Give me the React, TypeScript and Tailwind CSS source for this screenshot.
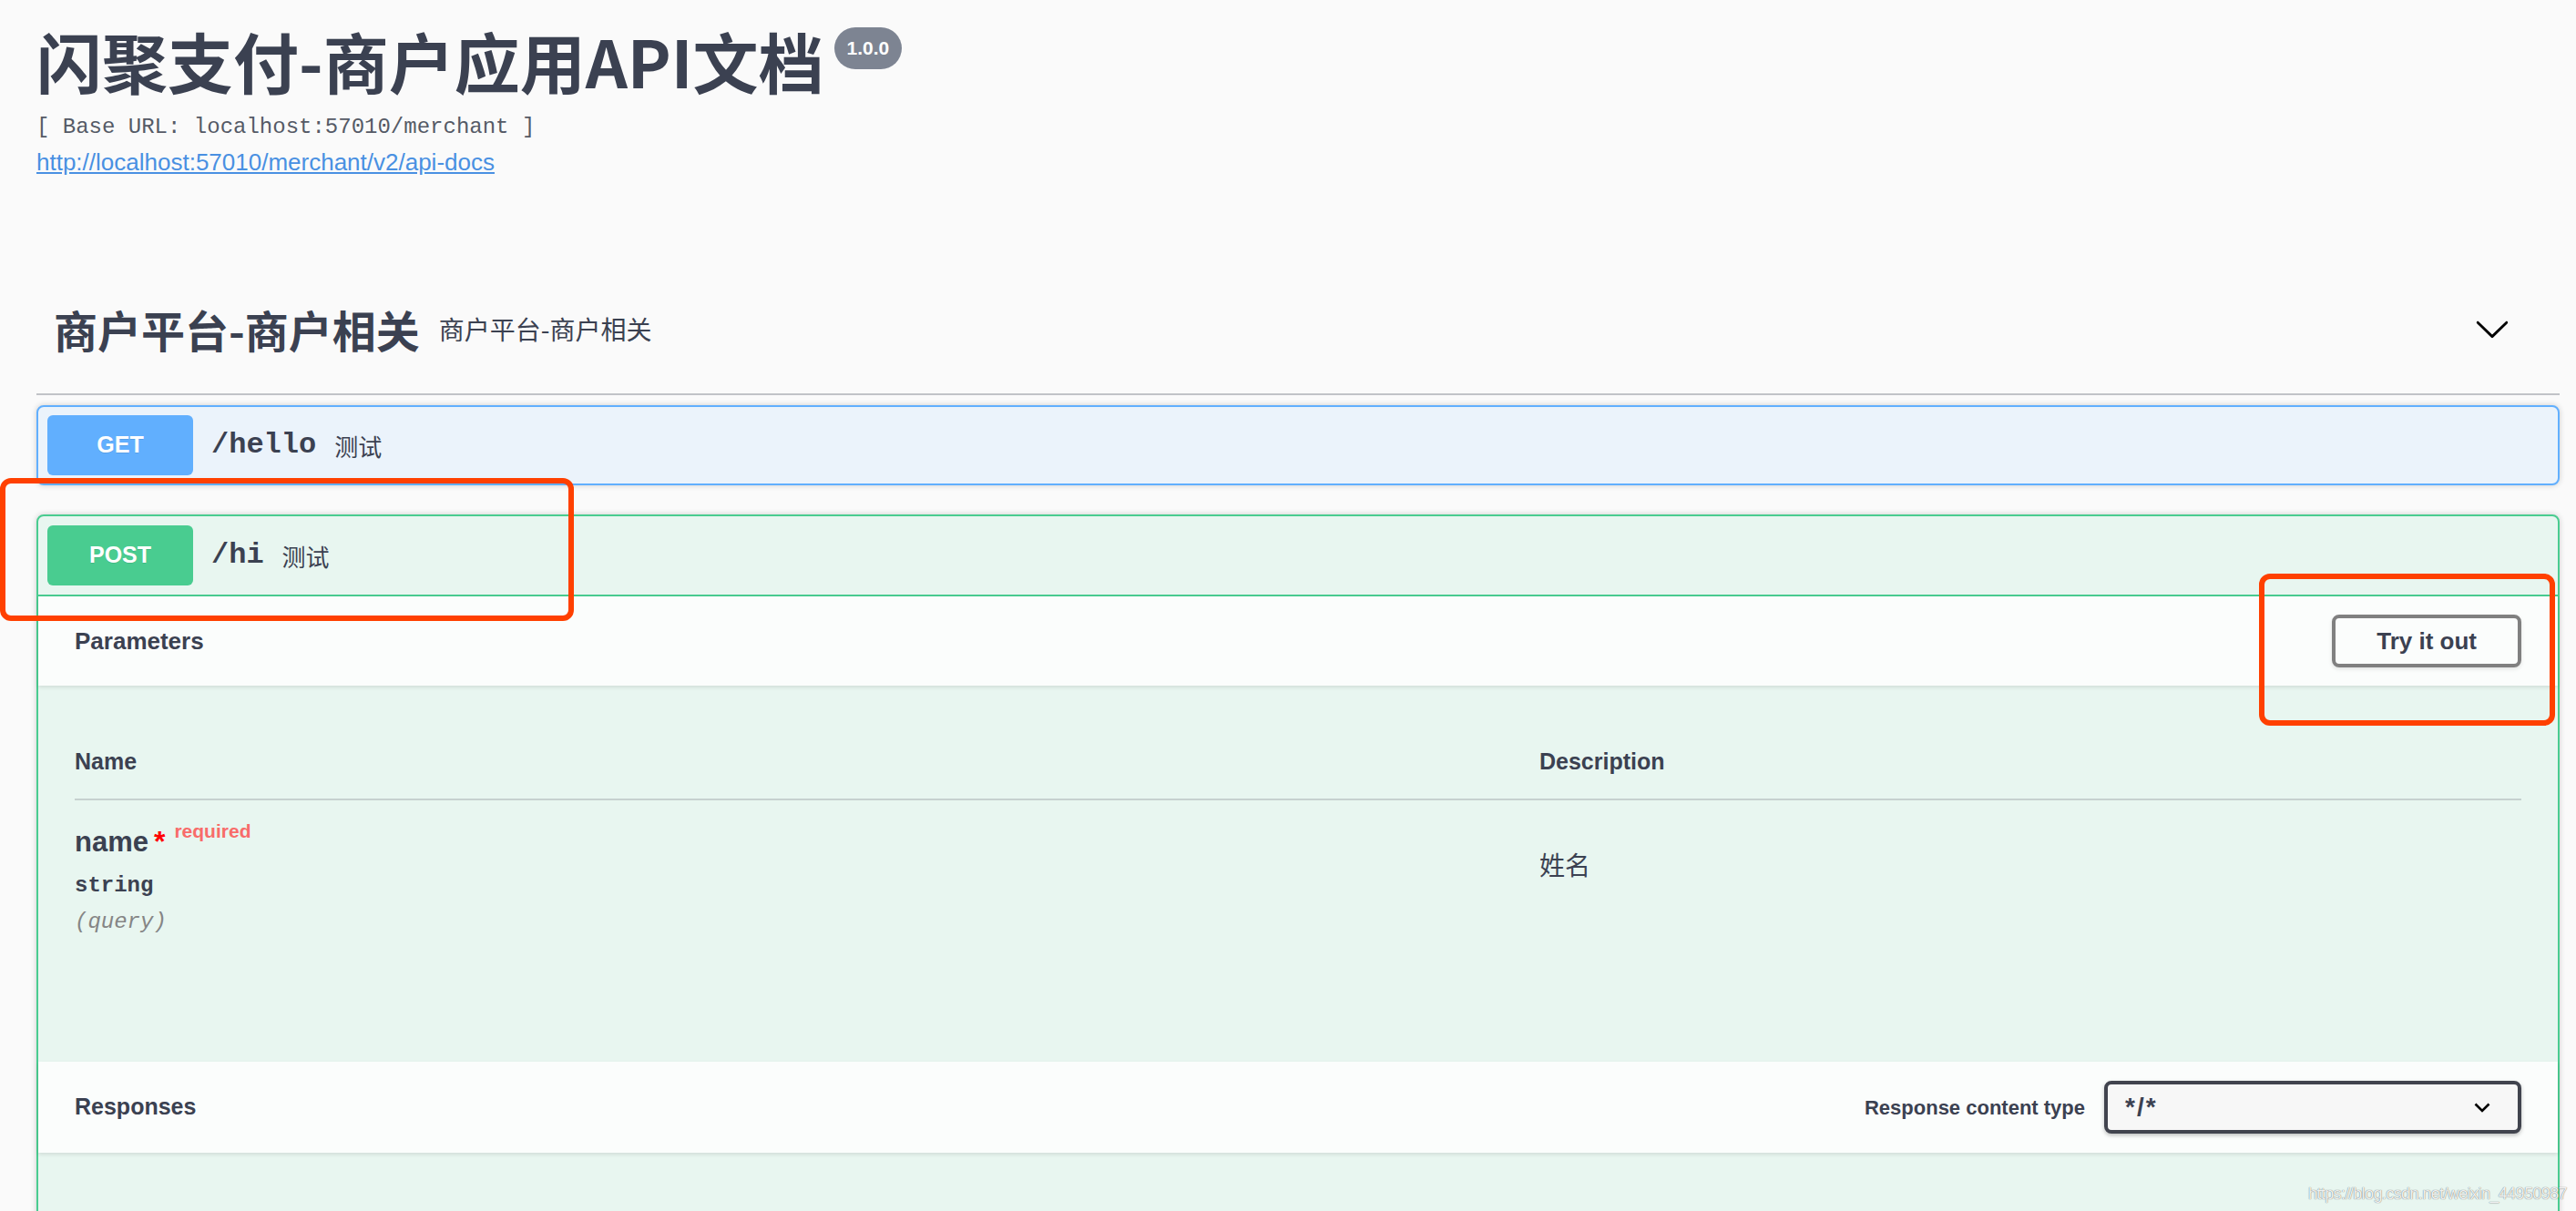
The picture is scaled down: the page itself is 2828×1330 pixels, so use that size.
import React from 'react';

function Chevron() {
  return (
    <svg width="40" height="40" viewBox="0 0 20 20" className="shrink-0">
      <path
        fill="#000"
        d="M17.418 6.109c.272-.268.709-.268.979 0s.271.701 0 .969l-7.908 7.83c-.27.268-.707.268-.979 0l-7.908-7.83c-.27-.268-.27-.701 0-.969.271-.268.709-.268.979 0L10 13.25l7.418-7.141z"
      />
    </svg>
  );
}

export default function App() {
  return (
    <div className="relative h-[1330px] w-full overflow-hidden bg-[#fafafa] text-[#3b4151]">
      <div className="pl-[40px] pr-[18px]">
        {/* info */}
        <div className="h-[290px] pt-[30px]">
          <div className="flex items-start">
            <h1 className="font-['Noto_Sans_CJK_SC',sans-serif] text-[72px] font-bold leading-[72px]">
              闪聚支付-商户应用API文档
            </h1>
            <span className="ml-[11px] flex h-[46px] items-center rounded-full bg-[#7d8492] px-[14px] font-['Liberation_Sans',sans-serif] text-[21px] font-bold text-white">
              1.0.0
            </span>
          </div>
          <div className="mt-[26px] font-['Liberation_Mono',monospace] text-[24px] leading-[24px] text-[#555a66]">
            [ Base URL: localhost:57010/merchant ]
          </div>
          <a
            href="#"
            className="mt-[13px] block w-fit font-['Liberation_Sans',sans-serif] text-[26px] leading-[26px] text-[#4990e2] underline"
          >
            http://localhost:57010/merchant/v2/api-docs
          </a>
        </div>

        {/* tag header */}
        <div className="flex h-[144px] items-center border-b-2 border-[#c1c3c7] pl-[19px] pr-[54px]">
          <h3 className="font-['Noto_Sans_CJK_SC',sans-serif] text-[48px] font-bold leading-[48px]">
            商户平台-商户相关
          </h3>
          <span className="ml-[21px] font-['Noto_Sans_CJK_SC',sans-serif] text-[28px] leading-[28px]">
            商户平台-商户相关
          </span>
          <div className="ml-auto">
            <Chevron />
          </div>
        </div>

        {/* GET /hello */}
        <div className="mt-[11px] flex h-[88px] items-center rounded-[8px] border-2 border-[#61affe] bg-[#ebf3fb] px-[10px] shadow-[0_0_6px_rgba(0,0,0,0.19)]">
          <span className="flex h-[66px] w-[160px] items-center justify-center rounded-[6px] bg-[#61affe] font-['Liberation_Sans',sans-serif] text-[25px] font-bold text-white [text-shadow:0_1px_0_rgba(0,0,0,0.1)]">
            GET
          </span>
          <span className="ml-[20px] font-['Liberation_Mono',monospace] text-[32px] font-bold">/hello</span>
          <span className="ml-[20px] font-['Noto_Sans_CJK_SC',sans-serif] text-[26px]">测试</span>
        </div>

        {/* POST /hi */}
        <div className="mt-[32px] rounded-[8px] border-2 border-[#49cc90] bg-[#e8f6f0] shadow-[0_0_6px_rgba(0,0,0,0.19)]">
          <div className="flex h-[88px] items-center border-b-2 border-[#49cc90] px-[10px]">
            <span className="flex h-[66px] w-[160px] items-center justify-center rounded-[6px] bg-[#49cc90] font-['Liberation_Sans',sans-serif] text-[25px] font-bold text-white [text-shadow:0_1px_0_rgba(0,0,0,0.1)]">
              POST
            </span>
            <span className="ml-[20px] font-['Liberation_Mono',monospace] text-[32px] font-bold">/hi</span>
            <span className="ml-[20px] font-['Noto_Sans_CJK_SC',sans-serif] text-[26px]">测试</span>
          </div>

          {/* parameters header */}
          <div className="flex h-[98px] items-center justify-between bg-[#fbfdfc] px-[40px] shadow-[0_2px_4px_rgba(0,0,0,0.1)]">
            <h4 className="font-['Liberation_Sans',sans-serif] text-[26px] font-bold">Parameters</h4>
            <button className="h-[58px] rounded-[8px] border-4 border-[#808080] px-[45px] font-['Liberation_Sans',sans-serif] text-[26px] font-bold text-[#3b4151] shadow-[0_2px_4px_rgba(0,0,0,0.1)]">
              Try it out
            </button>
          </div>

          {/* parameters table */}
          <div className="h-[413px] px-[40px] pt-[71px]">
            <div className="grid grid-cols-[1608px_1fr] border-b-2 border-[#c6d1cf] pb-[28px] font-['Liberation_Sans',sans-serif] text-[25px] font-bold leading-[25px]">
              <div>Name</div>
              <div>Description</div>
            </div>
            <div className="grid grid-cols-[1608px_1fr]">
              <div className="pt-[31px]">
                <div className="flex items-start font-['Liberation_Sans',sans-serif]">
                  <span className="text-[31px] font-bold leading-[30px]">name</span>
                  <span className="-mt-[1px] ml-[6px] text-[32px] font-bold leading-[30px] text-[#ff0000]">*</span>
                  <span className="-mt-[8px] ml-[10px] text-[21px] font-bold leading-[21px] text-[#f86c6a]">required</span>
                </div>
                <div className="mt-[21px] font-['Liberation_Mono',monospace] text-[24px] font-semibold leading-[24px]">
                  string
                </div>
                <div className="mt-[16px] font-['Liberation_Mono',monospace] text-[24px] italic leading-[24px] text-[#858585]">
                  (query)
                </div>
              </div>
              <div className="pt-[56px] font-['Noto_Sans_CJK_SC',sans-serif] text-[28px] leading-[28px]">姓名</div>
            </div>
          </div>

          {/* responses header */}
          <div className="flex h-[100px] items-center justify-between bg-[#fbfdfc] px-[40px] shadow-[0_2px_4px_rgba(0,0,0,0.1)]">
            <h4 className="font-['Liberation_Sans',sans-serif] text-[25px] font-bold">Responses</h4>
            <div className="flex items-center">
              <span className="font-['Liberation_Sans',sans-serif] text-[22px] font-bold">Response content type</span>
              <div className="ml-[21px] flex h-[58px] w-[458px] items-center justify-between rounded-[8px] border-4 border-[#41444e] bg-[#f7f7f7] pl-[19px] pr-[30px] shadow-[0_2px_4px_rgba(0,0,0,0.25)]">
                <span className="font-['Liberation_Sans',sans-serif] text-[28px] font-bold tracking-[2px]">*/*</span>
                <svg width="18" height="11" viewBox="0 0 18 11">
                  <polyline points="1.5,1.5 9,9 16.5,1.5" fill="none" stroke="#000" strokeWidth="2.6" />
                </svg>
              </div>
            </div>
          </div>
          <div className="h-[120px]" />
        </div>
      </div>

      {/* annotation boxes */}
      <div className="pointer-events-none absolute left-0 top-[525px] h-[157px] w-[630px] rounded-[12px] border-[6px] border-[#ff4000]" />
      <div className="pointer-events-none absolute left-[2480px] top-[630px] h-[167px] w-[325px] rounded-[12px] border-[6px] border-[#ff4000]" />

      {/* watermark */}
      <div className="pointer-events-none absolute bottom-[8px] right-[10px] font-['Liberation_Sans',sans-serif] text-[18px] leading-[22px] tracking-[-0.6px] text-white/90 [text-shadow:0_0_1px_rgba(0,0,0,0.5),0_0_1px_rgba(0,0,0,0.3)]">
        https://blog.csdn.net/weixin_44950987
      </div>
    </div>
  );
}
